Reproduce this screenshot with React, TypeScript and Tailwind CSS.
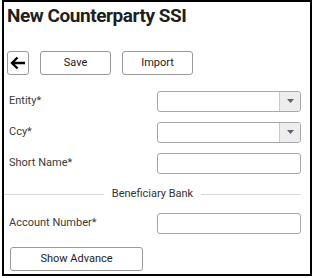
import React from "react";

const font = { fontFamily: "Roboto, 'Liberation Sans', sans-serif" };

function Caret() {
  return (
    <div className="flex h-full w-[21px] items-center justify-center border-l border-[#c8c8c8] bg-[#ededed] rounded-r-[3px]">
      <svg width="7" height="4" viewBox="0 0 7 4">
        <path d="M0 0 L7 0 L3.5 4 Z" fill="#5a6470" />
      </svg>
    </div>
  );
}

function Row({ label, children, mt }: { label: string; children: React.ReactNode; mt: string }) {
  return (
    <div className={`flex items-center justify-between h-[20px] ${mt}`}>
      <span className="pl-[2px] text-[11px] text-[#3a3a3a]">{label}</span>
      {children}
    </div>
  );
}

export default function App() {
  return (
    <div className="w-[314px] h-[278px] bg-white" style={font}>
      <div className="ml-[2px] w-[310px] h-[276px] border-2 border-black pr-[9px] pl-[3px]">
        <div className="mt-[2px] text-[19px] leading-[24px] font-bold text-[#1f1f1f] tracking-[-0.45px]">
          New Counterparty SSI
        </div>
        <div className="mt-[23px] flex items-center gap-[11px] h-[24px]">
          <button className="w-[22px] h-[24px] rounded-[3px] border border-[#9a9a9a] flex items-center justify-center bg-white">
            <svg width="16" height="14" viewBox="0 0 16 14">
              <path d="M15 7 H2.5 M7.5 1.5 L2 7 L7.5 12.5" stroke="#000" strokeWidth="2.4" fill="none" />
            </svg>
          </button>
          <button className="w-[71px] h-[24px] rounded-[3px] border border-[#9a9a9a] bg-white text-[11px] text-[#222]">
            Save
          </button>
          <button className="w-[71px] h-[24px] rounded-[3px] border border-[#9a9a9a] bg-white text-[11px] text-[#222]">
            Import
          </button>
        </div>
        <Row label="Entity*" mt="mt-[16px]">
          <div className="w-[144px] h-[21px] rounded-[3px] border border-[#a8a8a8] flex justify-end">
            <Caret />
          </div>
        </Row>
        <Row label="Ccy*" mt="mt-[11px]">
          <div className="w-[144px] h-[21px] rounded-[3px] border border-[#a8a8a8] flex justify-end">
            <Caret />
          </div>
        </Row>
        <Row label="Short Name*" mt="mt-[11px]">
          <div className="w-[144px] h-[21px] rounded-[3px] border border-[#a8a8a8]" />
        </Row>
        <div className="mt-[14px] -ml-[3px] flex items-center gap-[8px] h-[14px]">
          <div className="flex-1 h-px bg-[#d6d6d6]" />
          <span className="text-[11px] text-[#333]">Beneficiary Bank</span>
          <div className="flex-1 h-px bg-[#d6d6d6]" />
        </div>
        <Row label="Account Number*" mt="mt-[12px]">
          <div className="w-[144px] h-[21px] rounded-[3px] border border-[#a8a8a8]" />
        </Row>
        <button className="mt-[14px] ml-[3px] w-[133px] h-[24px] rounded-[3px] border border-[#9a9a9a] bg-white text-[11px] text-[#222] block">
          Show Advance
        </button>
      </div>
    </div>
  );
}
